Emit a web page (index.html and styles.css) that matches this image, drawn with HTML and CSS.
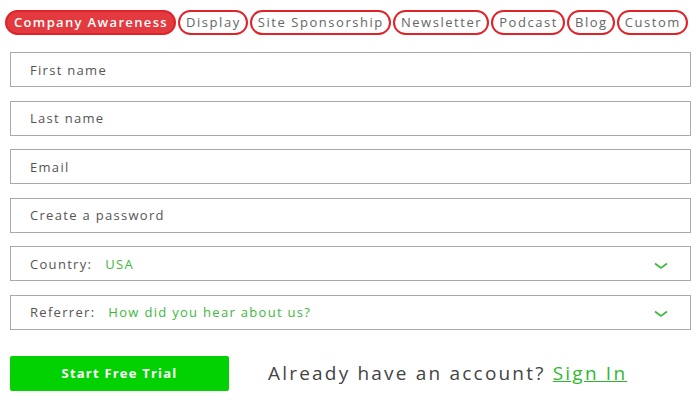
FILE: index.html
```html
<!DOCTYPE html>
<html>
<head>
<meta charset="utf-8">
<link rel="stylesheet" href="styles.css">
</head>
<body>
<div class="page">
  <nav class="tabs">
    <span class="tab active">Company Awareness</span>
    <span class="tab">Display</span>
    <span class="tab">Site Sponsorship</span>
    <span class="tab">Newsletter</span>
    <span class="tab">Podcast</span>
    <span class="tab">Blog</span>
    <span class="tab">Custom</span>
  </nav>
  <form class="form">
    <div class="field"><span class="ph">First name</span></div>
    <div class="field"><span class="ph">Last name</span></div>
    <div class="field"><span class="ph">Email</span></div>
    <div class="field"><span class="ph">Create a password</span></div>
    <div class="field select"><span class="ph">Country:</span><span class="val">USA</span>
      <svg class="chev" width="14" height="8" viewBox="0 0 14 8"><path d="M1 1.5 L7 6 L13 1.5" fill="none" stroke="#3cb93c" stroke-width="1.6"/></svg>
    </div>
    <div class="field select"><span class="ph">Referrer:</span><span class="val">How did you hear about us?</span>
      <svg class="chev" width="14" height="8" viewBox="0 0 14 8"><path d="M1 1.5 L7 6 L13 1.5" fill="none" stroke="#3cb93c" stroke-width="1.6"/></svg>
    </div>
    <div class="actions">
      <button type="button" class="btn">Start Free Trial</button>
      <p class="signin">Already have an account? <a href="#">Sign In</a></p>
    </div>
  </form>
</div>
</body>
</html>
```
FILE: styles.css
```css
html, body { margin: 0; padding: 0; background: #fff; }
body { font-family: "Open Sans", "DejaVu Sans", sans-serif; color: #555; }
.page { padding: 10px 9px 0 5px; }
.tabs { display: flex; gap: 2px; }
.tab {
  box-sizing: border-box;
  height: 25px;
  border: 2px solid #e0222a;
  border-radius: 13px;
  padding: 0 5px 0 6px;
  font-size: 13px;
  letter-spacing: 1.55px;
  line-height: 21px;
  color: #666;
  white-space: nowrap;
}
.tab.active { background: #e23a3e; color: #fff; font-weight: 600; padding: 0 6px 0 7px; letter-spacing: 1.35px; }
.form { margin: 17px 0 0 5px; display: flex; flex-direction: column; gap: 13.6px; }
.field {
  box-sizing: border-box;
  height: 35px;
  border: 1px solid #aaa;
  display: flex;
  align-items: center;
  padding: 0 20px 0 19px;
  font-size: 13px;
  letter-spacing: 1.3px;
  color: #555;
}
.field .val { color: #3cb93c; margin-left: 13px; }
.chev { margin-left: auto; margin-right: 2px; margin-top: 4px; }
.actions { display: flex; align-items: center; margin-top: 12px; }
.btn {
  width: 219px; height: 35px;
  background: #02d102; border: none; border-radius: 2px;
  color: #fff; font-family: "Open Sans", sans-serif; font-weight: 700; font-size: 13px;
  letter-spacing: 1.2px;
}
.signin { margin: 0 0 0 39px; font-size: 19px; letter-spacing: 2.2px; color: #444; }
.signin a { color: #2fb82f; text-decoration: underline; }
```
